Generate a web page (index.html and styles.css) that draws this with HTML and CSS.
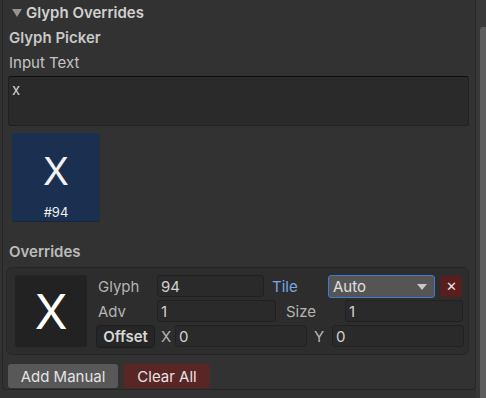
FILE: index.html
```html
<!DOCTYPE html>
<html lang="en">
<head>
  <meta charset="UTF-8">
  <title>Glyph Overrides</title>
  <link rel="stylesheet" href="styles.css">
</head>
<body>
  <div class="window">
    <div class="panel">
      <div class="foldout"><span class="arrow"></span>Glyph Overrides</div>
      <div class="heading">Glyph Picker</div>
      <div class="label">Input Text</div>
      <div class="textarea">x</div>

      <div class="tiles">
        <div class="tile">
          <div class="tile-char">X</div>
          <div class="tile-id">#94</div>
        </div>
      </div>

      <div class="section-title">Overrides</div>
      <div class="card">
        <div class="preview">X</div>
        <div class="fields">
          <div class="row">
            <span class="lbl w-glyph">Glyph</span>
            <div class="field f-glyph">94</div>
            <span class="lbl link">Tile</span>
            <div class="dropdown">Auto<span class="caret"></span></div>
            <div class="remove">&#x2715;</div>
          </div>
          <div class="row">
            <span class="lbl w-glyph">Adv</span>
            <div class="field f-adv">1</div>
            <span class="lbl w-size">Size</span>
            <div class="field f-size">1</div>
          </div>
          <div class="row">
            <span class="offset">Offset</span>
            <span class="lbl w-axis">X</span>
            <div class="field f-x">0</div>
            <span class="lbl w-axis-y">Y</span>
            <div class="field f-y">0</div>
          </div>
        </div>
      </div>

      <div class="actions">
        <button class="btn">Add Manual</button>
        <button class="btn danger">Clear All</button>
      </div>
    </div>
    <div class="gutter"></div>
    <div class="scrollbar"><div class="thumb"></div></div>
  </div>
</body>
</html>
```

FILE: styles.css
```css
body {
  margin: 0;
  background: #323232;
  font-family: 'Inter', 'Noto Sans', sans-serif;
  font-size: 15px;
  color: #c4c4c4;
  overflow: hidden;
}
.window {
  display: flex;
  width: 486px;
  height: 398px;
}
.panel {
  margin-left: 2px;
  width: 466px;
  height: 389px;
  border: 1px solid #262626;
  border-top: none;
  border-radius: 0 0 4px 4px;
  padding: 0 4px 0 5px;
  display: flex;
  flex-direction: column;
}
.gutter {
  width: 4px;
  background: #383838;
}
.scrollbar {
  width: 6px;
  background: #3a3a3a;
  padding-top: 27px;
}
.thumb {
  height: 100%;
  background: #5e5e5e;
  border-radius: 3px 0 0 0;
}
.foldout {
  height: 25px;
  display: flex;
  align-items: center;
  font-weight: 600;
  color: #d0d0d0;
  padding-left: 4px;
}
.arrow {
  width: 0;
  height: 0;
  border-left: 5px solid transparent;
  border-right: 5px solid transparent;
  border-top: 8px solid #949494;
  margin-right: 4px;
  margin-top: 1px;
}
.heading {
  height: 25px;
  display: flex;
  align-items: center;
  font-weight: 600;
  color: #c8c8c8;
  padding-left: 1px;
}
.label {
  height: 25px;
  display: flex;
  align-items: center;
  padding-left: 1px;
}
.textarea {
  height: 45px;
  margin-top: 1px;
  margin-right: 2px;
  background: #2a2a2a;
  border: 1px solid #212121;
  border-top-color: #0e0e0e;
  border-radius: 3px;
  padding: 3px 0 0 3px;
  color: #d2d2d2;
}
.tiles {
  display: flex;
  padding: 7px 0 0 4px;
  height: 100px;
}
.tile {
  width: 88px;
  height: 88px;
  background: #1b3050;
  border-bottom: 1px solid #142640;
  border-radius: 2px;
  display: flex;
  flex-direction: column;
  align-items: center;
  color: #f2f2f2;
}
.tile-char {
  font-size: 38px;
  line-height: 38px;
  margin-top: 19px;
}
.tile-id {
  font-size: 13px;
  margin-top: 14px;
}
.section-title {
  height: 27px;
  display: flex;
  align-items: center;
  font-weight: 600;
  color: #bcbcbc;
  padding-left: 1px;
  margin-top: 5px;
}
.card {
  margin: 2px 2px 0 -2px;
  background: #2d2d2d;
  border: 1px solid #262626;
  border-radius: 6px;
  display: flex;
  padding: 7px 0 0 8px;
  box-sizing: border-box;
  height: 88px;
}
.preview {
  width: 72px;
  height: 72px;
  background: #222222;
  border-radius: 3px;
  display: flex;
  align-items: center;
  justify-content: center;
  font-size: 48px;
  color: #ffffff;
}
.fields {
  margin-left: 11px;
  display: flex;
  flex-direction: column;
  gap: 3px;
}
.row {
  display: flex;
  align-items: center;
  height: 22px;
}
.lbl {
  color: #b4b4b4;
}
.w-glyph { width: 59px; }
.w-size { width: 59px; margin-left: 10px; }
.w-axis { width: 14px; margin-left: 6px; }
.w-axis-y { width: 18px; margin-left: 7px; }
.link {
  color: #7aa6e6;
  width: 57px;
  margin-left: 8px;
}
.field {
  background: #2a2a2a;
  border: 1px solid #212121;
  border-radius: 3px;
  display: flex;
  align-items: center;
  padding-left: 3px;
  box-sizing: border-box;
  height: 22px;
  color: #d2d2d2;
}
.f-glyph { width: 107px; }
.f-adv { width: 119px; }
.f-size { width: 118px; }
.f-x { width: 132px; }
.f-y { width: 132px; }
.dropdown {
  width: 107px;
  height: 23px;
  box-sizing: border-box;
  margin-left: -1px;
  background: #555555;
  border: 1px solid #3c7ad4;
  border-radius: 3px;
  display: flex;
  align-items: center;
  padding-left: 4px;
  color: #e0e0e0;
  position: relative;
}
.caret {
  position: absolute;
  right: 7px;
  top: 8px;
  border-left: 5px solid transparent;
  border-right: 5px solid transparent;
  border-top: 6px solid #c8c8c8;
}
.remove {
  width: 21px;
  height: 21px;
  margin-left: 6px;
  background: #5a1d1d;
  border-radius: 2px;
  display: flex;
  align-items: center;
  justify-content: center;
  color: #e6e6e6;
  font-size: 13px;
}
.offset {
  width: 59px;
  height: 23px;
  box-sizing: border-box;
  margin-left: -2px;
  background: #262626;
  border: 1px solid #1e1e1e;
  border-radius: 4px;
  display: flex;
  align-items: center;
  justify-content: center;
  font-weight: 600;
  color: #d8d8d8;
}
.actions {
  display: flex;
  gap: 6px;
  margin-top: 9px;
}
.btn {
  font-family: inherit;
  font-size: 15px;
  height: 24px;
  padding: 0;
  border: none;
  border-radius: 3px;
  background: #585858;
  color: #e4e4e4;
  width: 110px;
}
.btn.danger {
  background: #5a2525;
  width: 86px;
}
```
